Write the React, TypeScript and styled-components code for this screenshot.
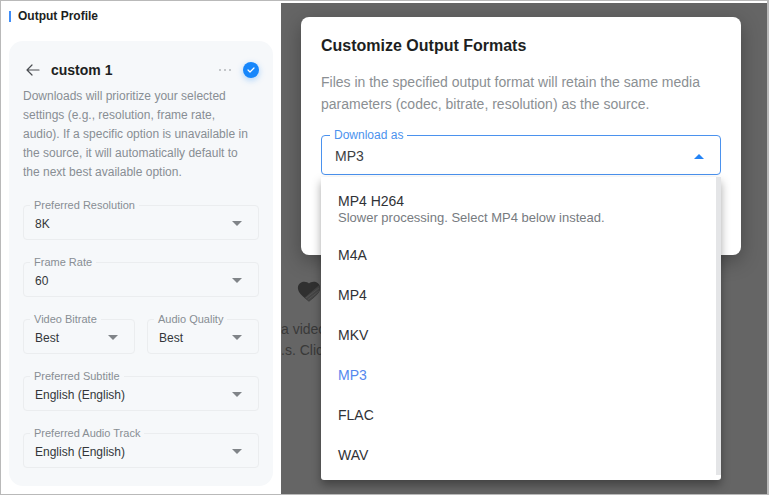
import React, { useState } from "react";
import styled, { createGlobalStyle } from "styled-components";

const GlobalStyle = createGlobalStyle`
  *, *::before, *::after { box-sizing: border-box; }
  html, body, #root { height: 100%; }
  body {
    margin: 0;
    background: #ffffff;
    font-family: "Liberation Sans", Arial, sans-serif;
    font-size: 12px;
    color: #333639;
  }
  button, select { font-family: inherit; }
  h1, h2, p, ul { margin: 0; padding: 0; }
`;

const Page = styled.div`
  display: grid;
  grid-template-columns: 280px 1fr;
  min-height: 100vh;
  border: solid #b9b9b9;
  border-width: 1px 2px 1px 1px;
`;

const ProfilePanel = styled.aside`
  display: flex;
  flex-direction: column;
  padding: 7px 8px;
`;

const PanelTitle = styled.h1`
  display: flex;
  align-items: center;
  gap: 7px;
  font-size: 12px;
  line-height: 16px;
  color: #1d1f22;

  &::before {
    content: "";
    width: 2px;
    height: 11px;
    background: #3f8df8;
  }
`;

const ProfileCard = styled.section`
  margin-top: 17px;
  padding: 17px 14px 18px;
  border-radius: 14px;
  background: #f6f8fa;
`;

const CardHeader = styled.header`
  display: flex;
  align-items: center;
  height: 24px;
`;

const CardName = styled.h2`
  flex: 1;
  padding-left: 8px;
  font-size: 14px;
  line-height: 20px;
  color: #1d1f22;
`;

const IconButton = styled.button`
  display: flex;
  align-items: center;
  justify-content: center;
  width: 20px;
  height: 20px;
  padding: 0;
  border: 0;
  background: transparent;
  color: #4a4d51;
  cursor: pointer;
`;

const ConfirmButton = styled(IconButton)`
  width: 16px;
  height: 16px;
  margin-left: 8px;
  border-radius: 50%;
  background: #1686fb;
  color: #ffffff;
  box-shadow: 0 2px 6px rgba(22, 134, 251, 0.35);
`;

const Note = styled.p`
  margin-top: 5px;
  padding-right: 4px;
  line-height: 19px;
  color: #888e94;
`;

const Fields = styled.div`
  display: grid;
  grid-template-columns: 1fr 1fr;
  column-gap: 12px;
  row-gap: 15px;
  margin-top: 16px;
`;

const FieldBox = styled.fieldset<{ $half?: boolean; $active?: boolean }>`
  grid-column: ${(p) => (p.$half ? "auto" : "1 / -1")};
  min-width: 0;
  margin: 0;
  padding: 0;
  border: 1px solid ${(p) => (p.$active ? "#4b92ee" : "#ebedef")};
  border-radius: 4px;
`;

const Legend = styled.legend<{ $active?: boolean }>`
  margin-left: ${(p) => (p.$active ? "8px" : "6px")};
  padding: 0 4px;
  font-size: ${(p) => (p.$active ? "12px" : "11px")};
  line-height: 14px;
  color: ${(p) => (p.$active ? "#4b92ee" : "#888e94")};
`;

const Control = styled.div`
  display: grid;
  align-items: center;

  > * { grid-area: 1 / 1; }
  > svg {
    justify-self: end;
    margin: 0 16px 4px 0;
    pointer-events: none;
  }
`;

const Select = styled.select`
  appearance: none;
  width: 100%;
  height: 27px;
  padding: 0 32px 3px 11px;
  border: 0;
  outline: 0;
  background: transparent;
  font-size: 12px;
  color: #333639;
`;

const Stage = styled.main`
  position: relative;
  margin-top: 2px;
  overflow: hidden;
  background: #656565;
`;

const Backdrop = styled.div`
  padding-top: 278px;
  font-size: 14px;
  line-height: 21px;
  color: #393939;

  svg { display: block; margin: 0 0 17px 16px; }
`;

const Dialog = styled.section`
  position: absolute;
  top: 14px;
  left: 20px;
  right: 26px;
  padding: 18px 20px 80px;
  border-radius: 8px;
  background: #ffffff;
  box-shadow: 0 6px 20px rgba(0, 0, 0, 0.3);
`;

const DialogTitle = styled.h2`
  font-size: 16px;
  line-height: 22px;
  color: #1d1f22;
`;

const DialogText = styled.p`
  margin: 14px 0 13px;
  font-size: 14px;
  line-height: 22px;
  color: #8b8f93;
`;

const Combo = styled.div`
  position: relative;
`;

const ComboButton = styled.button`
  width: 100%;
  height: 32px;
  padding: 0 32px 4px 13px;
  border: 0;
  background: transparent;
  font-size: 14px;
  text-align: left;
  color: #3d4043;
`;

const Menu = styled.ul`
  position: absolute;
  top: calc(100% + 2px);
  left: 0;
  right: 0;
  padding: 5px 0;
  border-radius: 0 0 3px 3px;
  background: linear-gradient(#e4e5e7, #e4e5e7) top right / 5px calc(100% - 5px) no-repeat #ffffff;
  list-style: none;
  box-shadow: 0 5px 10px rgba(0, 0, 0, 0.35);
`;

const Option = styled.li<{ $selected: boolean }>`
  padding: 11px 17px;
  font-size: 14px;
  line-height: 18px;
  color: ${(p) => (p.$selected ? "#5588ee" : "#303236")};
  cursor: pointer;

  &:first-child { padding: 10px 17px 9px; }
`;

const Hint = styled.span`
  display: block;
  font-size: 13px;
  line-height: 16px;
  color: #777b7f;
`;

const Caret = ({ up = false, color = "#808488" }: { up?: boolean; color?: string }) => (
  <svg width="10" height="5" viewBox="0 0 10 5" aria-hidden="true">
    <path d={up ? "M0 5 5 0l5 5z" : "M0 0h10L5 5z"} fill={color} />
  </svg>
);

const fields = [
  { id: "resolution", label: "Preferred Resolution", value: "8K" },
  { id: "rate", label: "Frame Rate", value: "60" },
  { id: "bitrate", label: "Video Bitrate", value: "Best", half: true },
  { id: "quality", label: "Audio Quality", value: "Best", half: true },
  { id: "subtitle", label: "Preferred Subtitle", value: "English (English)" },
  { id: "track", label: "Preferred Audio Track", value: "English (English)" },
];

const formats = [
  { name: "MP4 H264", hint: "Slower processing. Select MP4 below instead." },
  { name: "M4A" },
  { name: "MP4" },
  { name: "MKV" },
  { name: "MP3" },
  { name: "FLAC" },
  { name: "WAV" },
];

export default function App() {
  const [format, setFormat] = useState("MP3");

  return (
    <>
      <GlobalStyle />
      <Page>
        <ProfilePanel>
          <PanelTitle>Output Profile</PanelTitle>
          <ProfileCard>
            <CardHeader>
              <IconButton aria-label="Back">
                <svg width="14" height="12" viewBox="0 0 14 12" fill="none" stroke="currentColor" strokeWidth="1.2" strokeLinecap="round" strokeLinejoin="round">
                  <path d="M13 6H1M6 1 1 6l5 5" />
                </svg>
              </IconButton>
              <CardName>custom 1</CardName>
              <IconButton aria-label="More">
                <svg width="12" height="2" viewBox="0 0 12 2" fill="#85898e">
                  <circle cx="1" cy="1" r="0.8" />
                  <circle cx="6" cy="1" r="0.8" />
                  <circle cx="11" cy="1" r="0.8" />
                </svg>
              </IconButton>
              <ConfirmButton aria-label="Confirm">
                <svg width="8" height="6" viewBox="0 0 8 6" fill="none" stroke="currentColor" strokeWidth="1.2" strokeLinecap="round" strokeLinejoin="round">
                  <path d="M1 3l2 2 4-4" />
                </svg>
              </ConfirmButton>
            </CardHeader>
            <Note>
              Downloads will prioritize your selected settings (e.g., resolution, frame rate,
              audio). If a specific option is unavailable in the source, it will automatically
              default to the next best available option.
            </Note>
            <Fields>
              {fields.map((f) => (
                <FieldBox key={f.id} $half={f.half}>
                  <Legend>
                    <label htmlFor={f.id}>{f.label}</label>
                  </Legend>
                  <Control>
                    <Select id={f.id} defaultValue={f.value}>
                      <option>{f.value}</option>
                    </Select>
                    <Caret />
                  </Control>
                </FieldBox>
              ))}
            </Fields>
          </ProfileCard>
        </ProfilePanel>

        <Stage>
          <Backdrop>
            <svg width="24" height="21" viewBox="0 0 24 21" aria-hidden="true">
              <path d="M12 20.500C8 17.500 3.500 13.500 1.800 10.500-.2 6.500 1.200 2.600 4.600 1.300 7.600.2 10.600 1 12 2.600 13.400 1 16.400.2 19.400 1.300c3.400 1.300 4.800 5.200 2.800 9.200-1.700 3-6.200 7-10.200 10z" fill="#303030" />
              <path d="M7.500 16.800 22 4.200c1.200 2 1.200 4.200.2 6.300-1.700 3-6.200 7-10.200 10z" fill="#444444" />
              <path d="M9 17 22 7M11 18.500 21.500 10.500" stroke="#555555" strokeWidth="0.8" />
            </svg>
            <p>a video</p>
            <p>.s. Click</p>
          </Backdrop>
          <Dialog role="dialog" aria-labelledby="dialog-title">
            <DialogTitle id="dialog-title">Customize Output Formats</DialogTitle>
            <DialogText>
              Files in the specified output format will retain the same media parameters (codec,
              bitrate, resolution) as the source.
            </DialogText>
            <Combo>
              <FieldBox $active>
                <Legend $active>
                  <label htmlFor="format">Download as</label>
                </Legend>
                <Control>
                  <ComboButton id="format" role="combobox" aria-expanded="true" aria-controls="format-menu">
                    {format}
                  </ComboButton>
                  <Caret up color="#2483f5" />
                </Control>
              </FieldBox>
              <Menu id="format-menu" role="listbox">
                {formats.map((o) => (
                  <Option
                    key={o.name}
                    role="option"
                    aria-selected={o.name === format}
                    $selected={o.name === format}
                    onClick={() => setFormat(o.name)}
                  >
                    {o.name}
                    {o.hint && <Hint>{o.hint}</Hint>}
                  </Option>
                ))}
              </Menu>
            </Combo>
          </Dialog>
        </Stage>
      </Page>
    </>
  );
}
